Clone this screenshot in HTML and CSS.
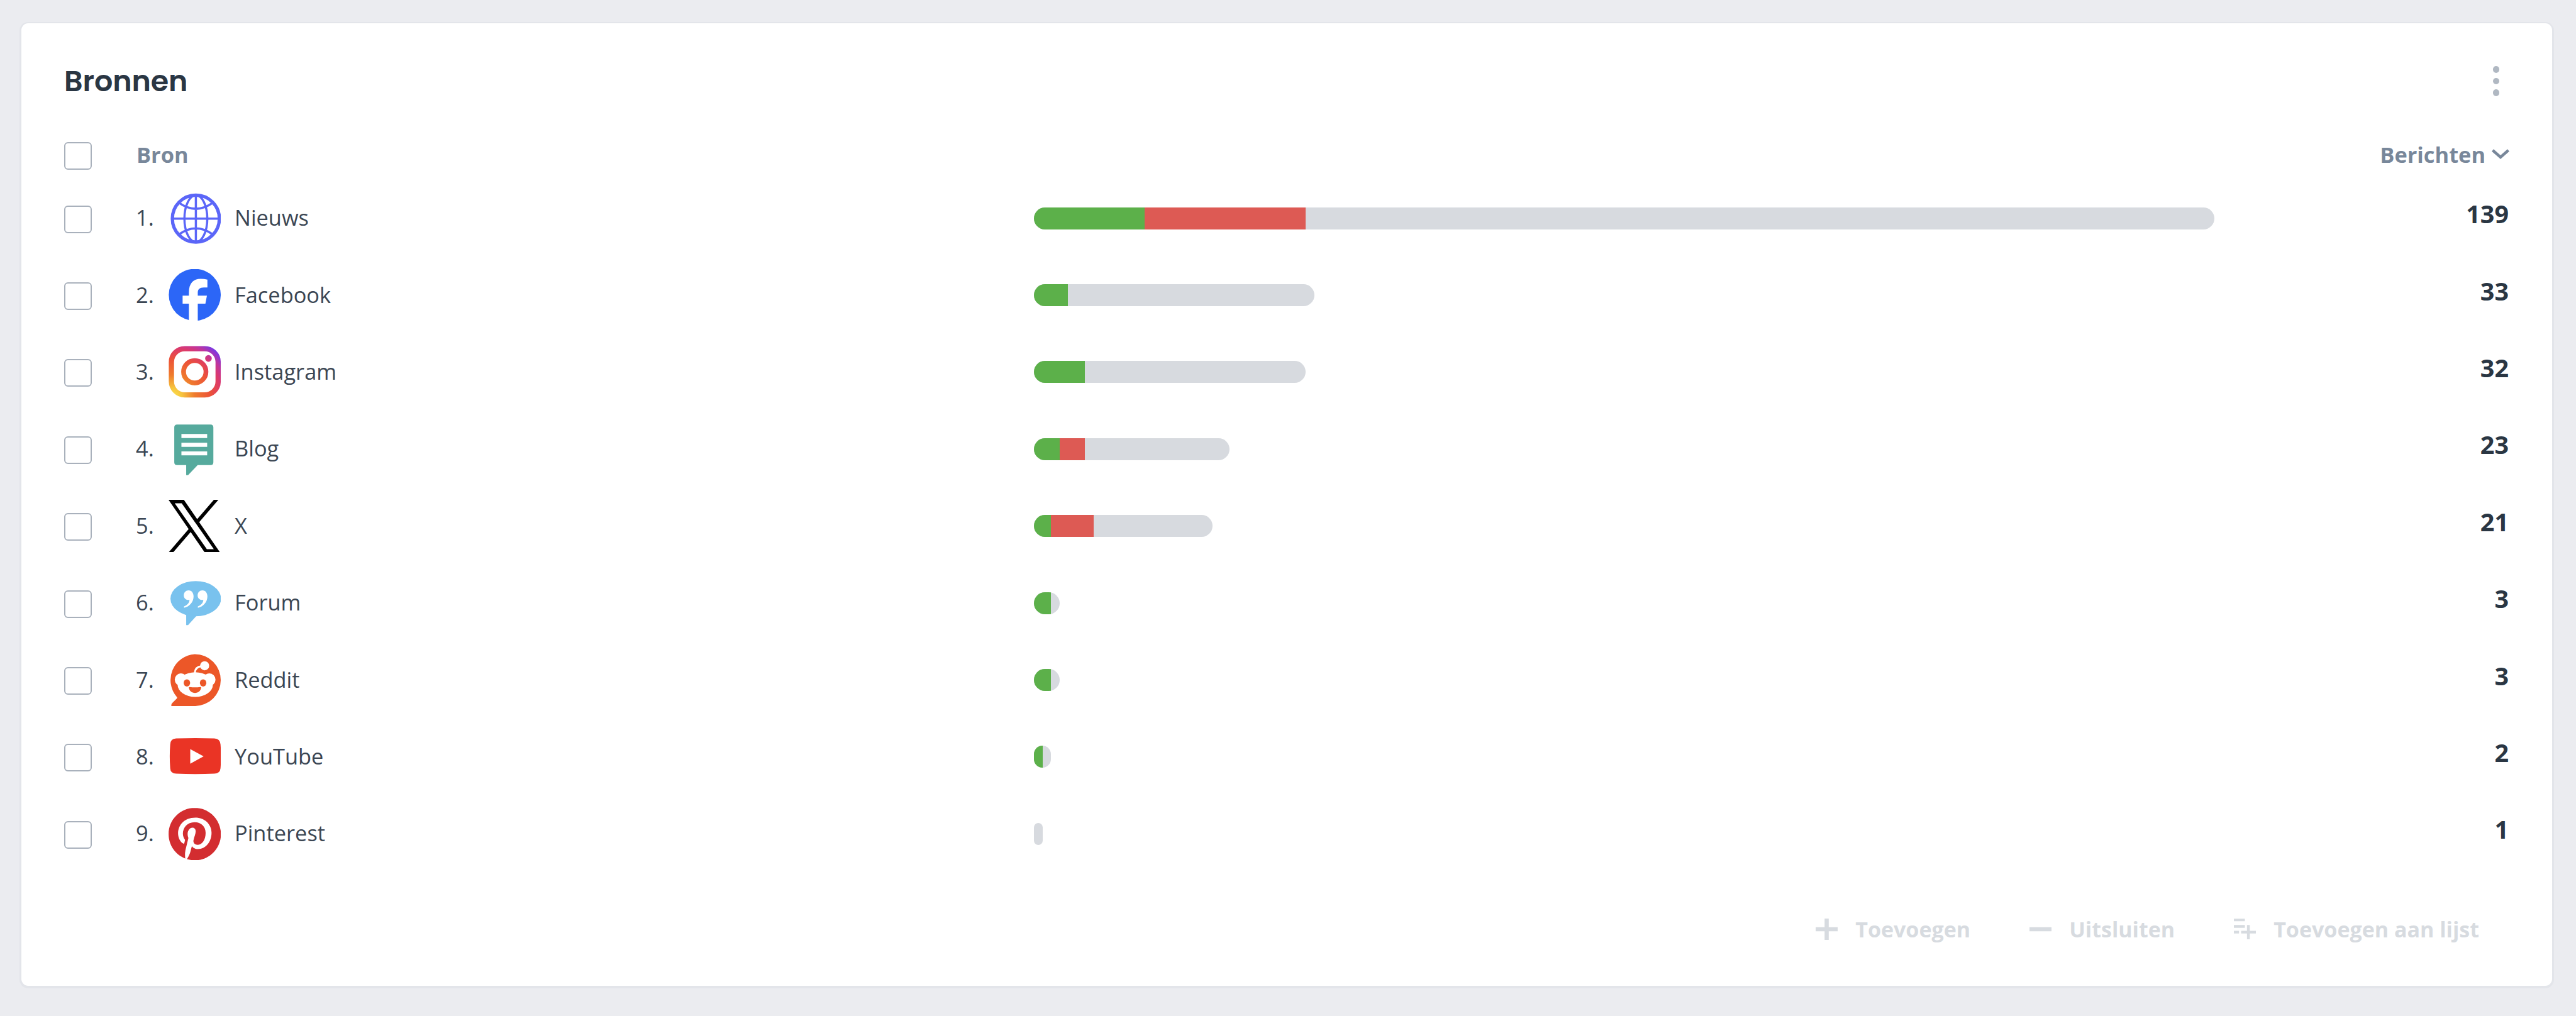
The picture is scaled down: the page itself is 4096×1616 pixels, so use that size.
FILE: index.html
```
<!DOCTYPE html>
<html lang="nl">
<head>
    <meta charset="UTF-8">
    <meta name="viewport" content="width=device-width, initial-scale=1.0">
    <title>Bronnen</title>
    <link rel="stylesheet" href="styles.css">
</head>
<body>
    <main class="card">
        <header class="card-header">
            <h2>Bronnen</h2>
            <div class="menu-dots"><span></span><span></span><span></span></div>
        </header>

        <div class="table-head">
            <span class="checkbox"></span>
            <span class="head-source">Bron</span>
            <span class="head-count">Berichten
                <svg class="chevron" viewBox="0 0 28 16"><path d="M1.5 2 L14 13 L26.5 2" fill="none" stroke="#78879a" stroke-width="4.4"/></svg>
            </span>
        </div>

        <div class="row">
            <span class="checkbox"></span>
            <span class="rank">1.</span>
            <svg class="icon" viewBox="0 0 110 110" fill="none" stroke="#5b66f8">
                <circle cx="57.3" cy="55" r="49.3" stroke-width="7"/>
                <ellipse cx="57.3" cy="55" rx="24" ry="49" stroke-width="4.6"/>
                <path d="M57.3 6V104M8 55H106M22 22Q57.3 47 92.6 22M22 88Q57.3 63 92.6 88" stroke-width="4.6"/>
            </svg>
            <span class="name">Nieuws</span>
            <div class="track"><div class="bar" style="width: 100%"><i class="pos" style="width: 9.35%"></i><i class="neg" style="width: 13.67%"></i></div></div>
            <span class="count">139</span>
        </div>

        <div class="row">
            <span class="checkbox"></span>
            <span class="rank">2.</span>
            <svg class="icon" viewBox="0 0 110 110">
                <circle cx="55" cy="54" r="54.5" fill="#2c66f7"/>
                <path d="M42.7 112V72.6H29.5V55.6H42.7V49C42.7 30 52 20.6 67.5 20.6Q75 20.6 81.5 22V38.5H74C65 38.5 61.3 42.5 61.3 49.5V55.6H80.5L77.3 72.6H61.3V112Z" fill="#fff"/>
            </svg>
            <span class="name">Facebook</span>
            <div class="track"><div class="bar" style="width: 23.74%"><i class="pos" style="width: 12.12%"></i></div></div>
            <span class="count">33</span>
        </div>

        <div class="row">
            <span class="checkbox"></span>
            <span class="rank">3.</span>
            <svg class="icon" viewBox="0 0 110 110" fill="none" stroke="url(#insta)">
                <defs>
                    <radialGradient id="insta" gradientUnits="userSpaceOnUse" cx="10" cy="106" r="150">
                        <stop offset="0" stop-color="#fbe04a"/>
                        <stop offset="0.12" stop-color="#f6c43f"/>
                        <stop offset="0.3" stop-color="#ef7b2d"/>
                        <stop offset="0.52" stop-color="#ec5238"/>
                        <stop offset="0.67" stop-color="#dc3a6a"/>
                        <stop offset="0.76" stop-color="#c2359a"/>
                        <stop offset="0.88" stop-color="#7438ea"/>
                    </radialGradient>
                </defs>
                <rect x="6" y="6" width="98" height="97" rx="28" stroke-width="11"/>
                <circle cx="55" cy="54.5" r="23.5" stroke-width="10"/>
                <circle cx="83.7" cy="26.5" r="7" fill="url(#insta)" stroke="none"/>
            </svg>
            <span class="name">Instagram</span>
            <div class="track"><div class="bar" style="width: 23.02%"><i class="pos" style="width: 18.75%"></i></div></div>
            <span class="count">32</span>
        </div>

        <div class="row">
            <span class="checkbox"></span>
            <span class="rank">4.</span>
            <svg class="icon" viewBox="0 0 110 110">
                <path d="M18 3H88Q94 3 94 9V82Q94 88 88 88H61L41 109H37V88H18Q12 88 12 82V9Q12 3 18 3Z" fill="#56aa9d"/>
                <path d="M27 27H81M27 45.5H81M27 63.5H81" stroke="#fff" stroke-width="8.5"/>
            </svg>
            <span class="name">Blog</span>
            <div class="track"><div class="bar" style="width: 16.55%"><i class="pos" style="width: 13.04%"></i><i class="neg" style="width: 13.04%"></i></div></div>
            <span class="count">23</span>
        </div>

        <div class="row">
            <span class="checkbox"></span>
            <span class="rank">5.</span>
            <svg class="icon" viewBox="0 0 1222 1222">
                <path d="M714.163 519.284L1160.89 0H1055.03L667.137 450.887L357.328 0H0L468.492 681.821L0 1226.37H105.866L515.491 750.218L842.672 1226.37H1200L714.137 519.284H714.163ZM569.165 687.828L521.697 619.934L144.011 79.6944H306.615L611.412 515.685L658.88 583.579L1055.08 1150.3H892.476L569.165 687.854V687.828Z" fill="#000"/>
            </svg>
            <span class="name">X</span>
            <div class="track"><div class="bar" style="width: 15.11%"><i class="pos" style="width: 9.52%"></i><i class="neg" style="width: 23.81%"></i></div></div>
            <span class="count">21</span>
        </div>

        <div class="row">
            <span class="checkbox"></span>
            <span class="rank">6.</span>
            <svg class="icon" viewBox="0 0 110 110">
                <ellipse cx="57" cy="46.5" rx="53" ry="37" fill="#79c2ee"/>
                <path d="M37 76V102H41L59 82Z" fill="#79c2ee"/>
                <path id="quote" d="M42 29C48.5 29 52.5 34.5 52.5 42C52.5 53 44 64 32.5 65.5V62.5C39 60 43.5 55.5 44 49C36 50 32 45 32 39.5C32 33 36.5 29 42 29Z" fill="#fff"/>
                <use href="#quote" x="29"/>
            </svg>
            <span class="name">Forum</span>
            <div class="track"><div class="bar" style="width: 2.16%"><i class="pos" style="width: 66.67%"></i></div></div>
            <span class="count">3</span>
        </div>

        <div class="row">
            <span class="checkbox"></span>
            <span class="rank">7.</span>
            <svg class="icon" viewBox="0 0 110 110">
                <path d="M55 0.5A54.5 54.5 0 0 1 55 109.5H6Q5 106 8 103L17 94Q19 92 17 90A54.5 54.5 0 0 1 55 0.5Z" fill="#ec5728"/>
                <g fill="#fff">
                    <circle cx="26" cy="54" r="13"/>
                    <circle cx="85.5" cy="54" r="13"/>
                    <ellipse cx="56" cy="64.5" rx="37" ry="26"/>
                    <circle cx="75.7" cy="25" r="9.5"/>
                </g>
                <path d="M55 40Q56 27 69 26" fill="none" stroke="#fff" stroke-width="4"/>
                <g fill="#ec5728">
                    <ellipse cx="38.5" cy="61" rx="6.8" ry="7.5"/>
                    <ellipse cx="72.5" cy="61" rx="6.8" ry="7.5"/>
                    <path d="M42.5 71Q42.5 69.5 44.5 69.5Q55.5 71 66.5 69.5Q68.5 69.5 68.5 71C67 78.5 62 82 55.5 82C49 82 44 78.5 42.5 71Z"/>
                </g>
            </svg>
            <span class="name">Reddit</span>
            <div class="track"><div class="bar" style="width: 2.16%"><i class="pos" style="width: 66.67%"></i></div></div>
            <span class="count">3</span>
        </div>

        <div class="row">
            <span class="checkbox"></span>
            <span class="rank">8.</span>
            <svg class="icon" viewBox="0 0 110 110">
                <path d="M16 16.5Q56 15 96 16.5Q108 17 109 29Q111 54 109 79Q108 90 96 90.5Q56 92 16 90.5Q4 90 3.5 79Q1.5 54 3.5 29Q4 17 16 16.5Z" fill="#ea3425"/>
                <path d="M45.5 39V69.5L73.5 54Z" fill="#fff"/>
            </svg>
            <span class="name">YouTube</span>
            <div class="track"><div class="bar" style="width: 1.44%"><i class="pos" style="width: 50%"></i></div></div>
            <span class="count">2</span>
        </div>

        <div class="row">
            <span class="checkbox"></span>
            <span class="rank">9.</span>
            <svg class="icon" viewBox="0 0 24 24">
                <circle cx="12" cy="11.9" r="11.5" fill="#fff"/>
                <path d="M12.017 0C5.396 0 .029 5.367.029 11.987c0 5.079 3.158 9.417 7.618 11.162-.105-.949-.199-2.403.041-3.439.219-.937 1.406-5.957 1.406-5.957s-.359-.72-.359-1.781c0-1.663.967-2.911 2.168-2.911 1.024 0 1.518.769 1.518 1.688 0 1.029-.653 2.567-.992 3.992-.285 1.193.6 2.165 1.775 2.165 2.128 0 3.768-2.245 3.768-5.487 0-2.861-2.063-4.869-5.008-4.869-3.41 0-5.409 2.562-5.409 5.199 0 1.033.394 2.143.889 2.741.099.12.112.225.085.345-.09.375-.293 1.199-.334 1.363-.053.225-.172.271-.401.165-1.495-.69-2.433-2.878-2.433-4.646 0-3.776 2.748-7.252 7.92-7.252 4.158 0 7.392 2.967 7.392 6.923 0 4.135-2.607 7.462-6.233 7.462-1.214 0-2.354-.629-2.758-1.379l-.749 2.848c-.269 1.045-1.004 2.352-1.498 3.146 1.123.345 2.306.535 3.55.535 6.607 0 11.985-5.365 11.985-11.987C23.97 5.39 18.592.026 11.985.026L12.017 0z" fill="#d32d30"/>
            </svg>
            <span class="name">Pinterest</span>
            <div class="track"><div class="bar" style="width: 0.72%"></div></div>
            <span class="count">1</span>
        </div>

        <footer class="actions">
            <span class="action">
                <svg viewBox="0 0 35 34"><path d="M0 17H35M17.5 0V34" stroke="#d7dbe0" stroke-width="6.6"/></svg>
                Toevoegen
            </span>
            <span class="action">
                <svg viewBox="0 0 35 34"><path d="M0 17H35" stroke="#d7dbe0" stroke-width="6.6"/></svg>
                Uitsluiten
            </span>
            <span class="action">
                <svg viewBox="0 0 47 45" fill="#d7dbe0"><path d="M0 0H23.5V5.5H0ZM0 13.5H23.5V19.5H0ZM0 26H11V31.5H0ZM15.5 26H28V13.5H34V26H47V31.5H34V44H28V31.5H15.5Z"/></svg>
                Toevoegen aan lijst
            </span>
        </footer>
    </main>
</body>
</html>
```
FILE: styles.css
```
* {
    margin: 0;
    padding: 0;
    box-sizing: border-box;
}

body {
    height: 1616px;
    padding: 37px 38px 48px 34px;
    font-family: 'Open Sans', sans-serif;
    font-size: 34.4px;
    background: #ebecf0;
    color: #3b4653;
    overflow: hidden;
}

.card {
    height: 1531px;
    padding: 0 68px;
    background: white;
    border-radius: 11px;
    box-shadow: 0 1px 0 3px #e3e5ea;
}

.card-header {
    display: flex;
    align-items: center;
    justify-content: space-between;
    height: 184px;
}

h2 {
    font-family: 'Poppins', 'Inter', sans-serif;
    font-size: 46px;
    font-weight: 600;
    letter-spacing: -0.1px;
    color: #2a3643;
}

.menu-dots {
    display: flex;
    flex-direction: column;
    gap: 8px;
    margin-right: 16px;
}

.menu-dots span {
    width: 10.4px;
    height: 10.4px;
    border-radius: 50%;
    background: #b0b8c2;
}

.table-head {
    display: flex;
    align-items: center;
    height: 50px;
    margin-bottom: 15px;
    font-weight: 700;
    color: #78879a;
}

.checkbox {
    flex: none;
    width: 44px;
    height: 44px;
    margin-top: 3px;
    border: 2px solid #a9b1bc;
    border-radius: 6px;
}

.head-source {
    margin-left: 71px;
    padding-bottom: 2px;
}

.head-count {
    display: flex;
    align-items: center;
    gap: 10px;
    margin-left: auto;
    padding-bottom: 2px;
}

.chevron {
    width: 28px;
    height: 16px;
}

.row {
    display: grid;
    grid-template-columns: 114px 52px 83.4px 21.6px 1271.4px 1876.2px 1fr;
    align-items: center;
    height: 122.4px;
}

.rank {
    padding-bottom: 3px;
}

.icon {
    width: 83.4px;
    height: 83.4px;
}

.name {
    grid-column: 5;
    padding-bottom: 3px;
}

.bar {
    display: flex;
    height: 35px;
    border-radius: 17.5px;
    background: #d7dadf;
    overflow: hidden;
}

.pos {
    background: #5cb04a;
}

.neg {
    background: #dd5a54;
}

.count {
    padding-bottom: 14px;
    padding-right: 1px;
    font-size: 39.5px;
    font-weight: 700;
    text-align: right;
    color: #2a3643;
}

.actions {
    display: flex;
    justify-content: flex-end;
    align-items: center;
    gap: 94px;
    height: 181px;
    padding-right: 48px;
    font-size: 34px;
    font-weight: 700;
    color: #d7dbe0;
}

.action {
    display: flex;
    align-items: center;
    gap: 28px;
}

.action svg {
    width: 35px;
    height: 34px;
}
```
